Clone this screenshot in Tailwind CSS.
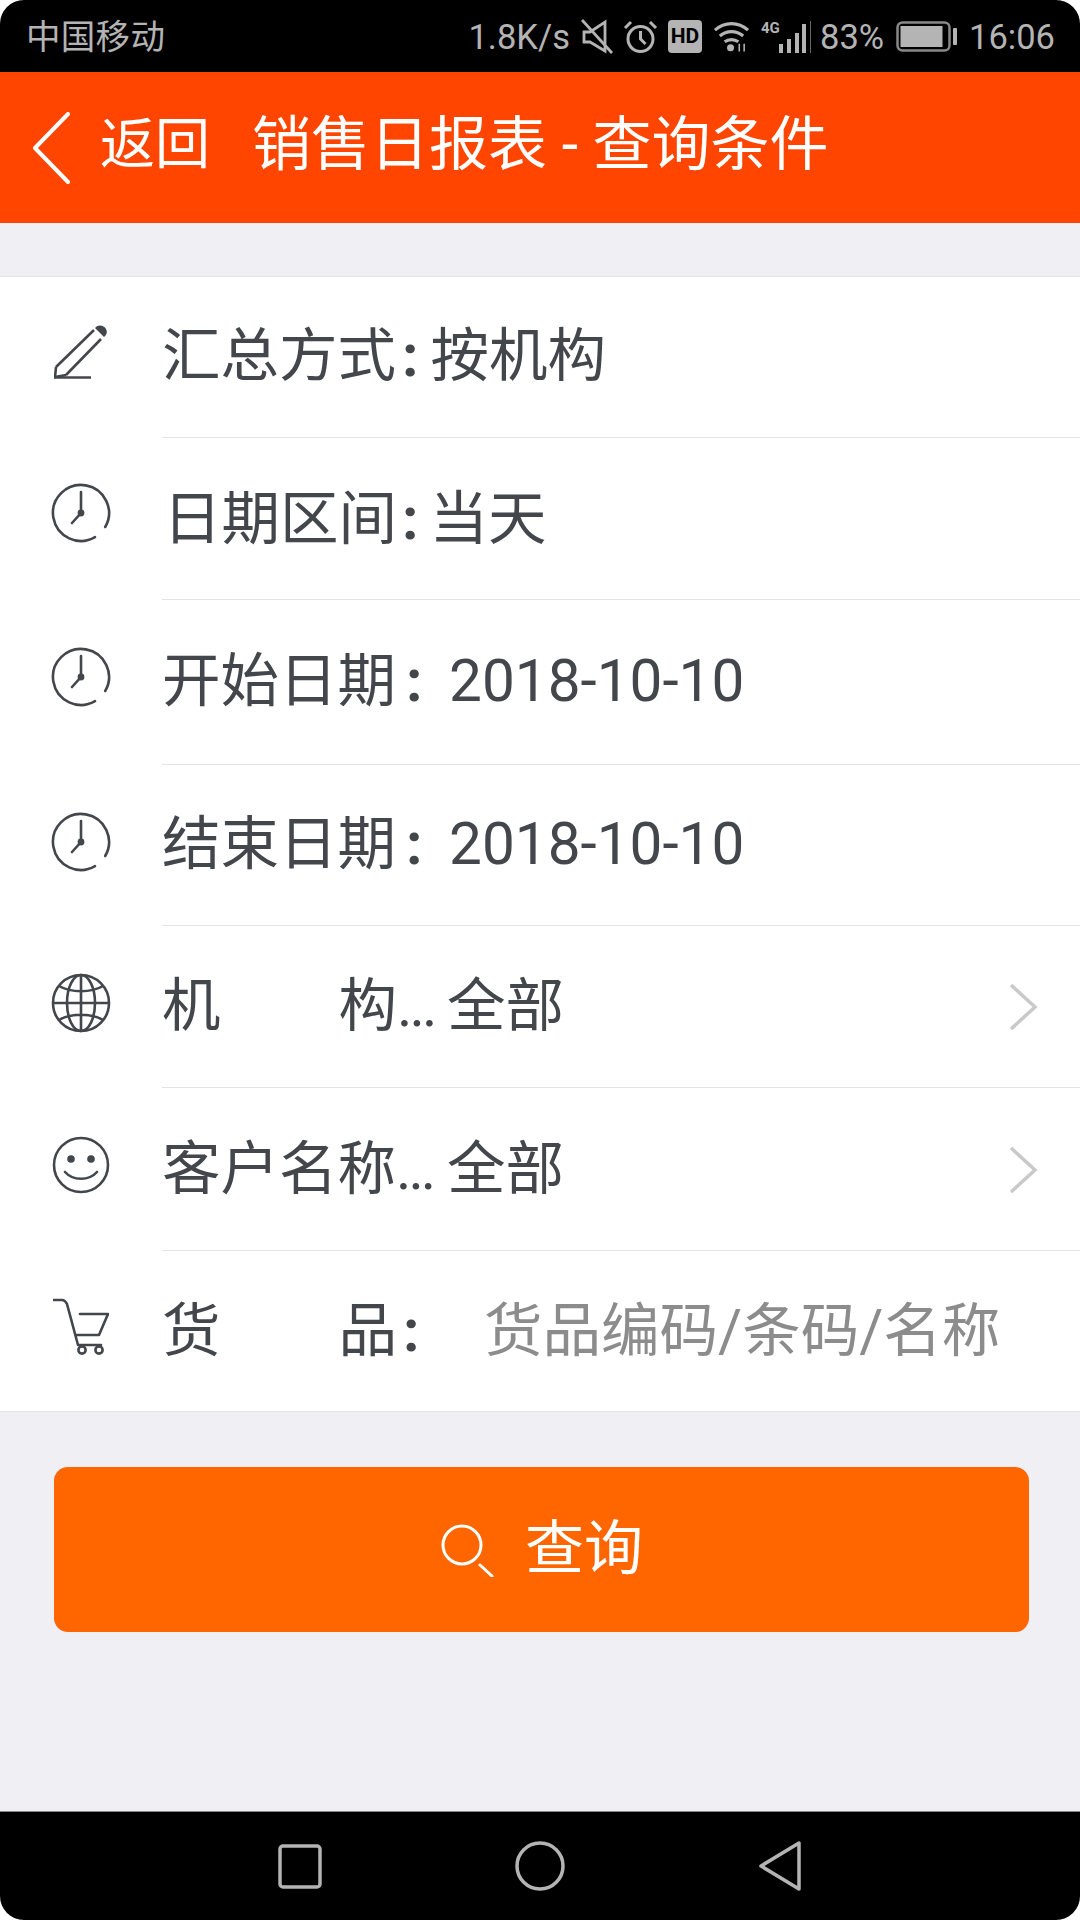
<!DOCTYPE html>
<html lang="zh"><head><meta charset="utf-8">
<script src="https://cdn.jsdelivr.net/npm/@tailwindcss/browser@4"></script>
</head>
<body class="bg-white">
<div class="w-[1080px] h-[1920px] flex flex-col overflow-hidden rounded-[24px] bg-[#efeff4] font-['Roboto','Noto_Sans_CJK_SC',sans-serif] text-[58.5px] text-[#43474c]">
  <div class="h-[72px] bg-black shrink-0 flex items-center text-[34.5px] text-[#b4b4b4] pl-[26px]">
    <span class="tracking-[0.3px] mt-[3px]">中国移动</span>
    <div class="ml-auto flex items-center pr-[25px]">
      <span class="mt-[3px]">1.8K/s</span>
      <svg class="ml-[11px]" width="32" height="35" viewBox="0 0 32 35" fill="none" stroke="#b4b4b4" stroke-width="2.8"><path d="M3 13v10h6l15 9V3L9 13z"/><path d="M1 1l30 33"/></svg>
      <svg class="ml-[10px]" width="35" height="35" viewBox="0 0 35 35" fill="none" stroke="#b4b4b4" stroke-width="3"><circle cx="17.5" cy="20" r="12.5"/><path d="M17.5 12v8l5 5M2 9l6-6M33 9l-6-6"/></svg>
      <div class="ml-[10px] w-[34px] h-[33px] rounded-[4px] bg-[#b4b4b4] text-black text-[21px] font-bold flex items-center justify-center leading-none">HD</div>
      <svg class="ml-[11px]" width="37" height="34" viewBox="0 0 38 34" fill="none" stroke="#b4b4b4" stroke-width="3.2"><path d="M2 11c10-9 24-9 34 0M7 17c7-6 17-6 24 0M12 23c4-3 10-3 14 0"/><circle cx="18" cy="29" r="3.6" fill="#b4b4b4" stroke="none"/><path d="M27 25v8M32 25v8" stroke-width="1.6"/></svg>
      <div class="relative ml-[11px] w-[50px] h-[33px]">
        <span class="absolute left-0 top-[1px] text-[15px] font-bold leading-[15px]">4G</span>
        <svg class="absolute left-0 top-0" width="50" height="33" viewBox="0 0 50 33" fill="#b4b4b4"><rect x="18" y="24" width="4" height="9"/><rect x="26" y="19" width="4" height="14"/><rect x="34" y="13" width="4" height="20"/><rect x="41" y="4" width="4" height="29"/><rect x="49" y="1" width="1" height="32" fill="#666"/></svg>
      </div>
      <span class="ml-[9px] mt-[3px]">83%</span>
      <svg class="ml-[12px]" width="61" height="31" viewBox="0 0 61 31" fill="none"><rect x="1.5" y="1.5" width="52" height="28" rx="5" stroke="#888" stroke-width="2.5"/><rect x="4.5" y="5" width="42" height="21" fill="#b4b4b4"/><rect x="57" y="7" width="4" height="17" rx="1" fill="#b4b4b4"/></svg>
      <span class="ml-[12px] mt-[3px]">16:06</span>
    </div>
  </div>
  <div class="h-[151px] bg-[#ff4500] shrink-0 flex items-center text-white">
    <svg class="ml-[32px]" width="40" height="72" viewBox="0 0 40 72" fill="none" stroke="#fff" stroke-width="4" stroke-linecap="round"><path d="M36 2L3 36l33 34" stroke-linejoin="round"/></svg>
    <div class="flex items-center pb-[6px] text-[59px]">
      <span class="ml-[28px] text-[55px] leading-none">返回</span>
      <span class="ml-[42px] leading-none">销售日报表 - 查询条件</span>
    </div>
  </div>
  <div class="mt-[53px] bg-white border-y border-[#e4e4e8] shrink-0">
    <div class="h-[161px] flex items-center">
      <div class="w-[162px] flex justify-center pb-[12px]"><svg width="54" height="54" viewBox="0 0 54 54" fill="none" stroke="#43474c" stroke-width="2.6"><path d="M2 42L40 5M12 50L47 14M2 42L1 52L12 50"/><path d="M0 52.5H37"/><path d="M41 3C44 -1 50 0 52 4C54 8 52 10 50 12z" fill="#43474c" stroke="none"/></svg></div>
      <div class="flex-1 h-full border-b border-[#e4e4e8] flex items-center"><span>汇总方式</span><span class="ml-[6px] font-bold">:</span><span class="ml-[12px]">按机构</span></div>
    </div>
    <div class="h-[162px] flex items-center">
      <div class="w-[162px] flex justify-center pb-[12px]"><svg width="60" height="60" viewBox="0 0 60 60" fill="none" stroke="#43474c" stroke-width="2.6" stroke-linecap="round"><path d="M54.2 44A28 28 0 1 0 44 54.2"/><path d="M30 9v21L21 40"/><circle cx="30" cy="30" r="3.4" fill="#43474c" stroke="none"/></svg></div>
      <div class="flex-1 h-full border-b border-[#e4e4e8] flex items-center pt-[2px] pl-[1px]"><span>日期区间</span><span class="ml-[5px] font-bold">:</span><span class="ml-[11px]">当天</span></div>
    </div>
    <div class="h-[165px] flex items-center">
      <div class="w-[162px] flex justify-center pb-[11px]"><svg width="60" height="60" viewBox="0 0 60 60" fill="none" stroke="#43474c" stroke-width="2.6" stroke-linecap="round"><path d="M54.2 44A28 28 0 1 0 44 54.2"/><path d="M30 9v21L21 40"/><circle cx="30" cy="30" r="3.4" fill="#43474c" stroke="none"/></svg></div>
      <div class="flex-1 h-full border-b border-[#e4e4e8] flex items-center"><div class="w-[287px] flex"><span>开始日期</span><span class="ml-[10px] font-bold">:</span></div><span>2018-10-10</span></div>
    </div>
    <div class="h-[161px] flex items-center">
      <div class="w-[162px] flex justify-center pb-[8px]"><svg width="60" height="60" viewBox="0 0 60 60" fill="none" stroke="#43474c" stroke-width="2.6" stroke-linecap="round"><path d="M54.2 44A28 28 0 1 0 44 54.2"/><path d="M30 9v21L21 40"/><circle cx="30" cy="30" r="3.4" fill="#43474c" stroke="none"/></svg></div>
      <div class="flex-1 h-full border-b border-[#e4e4e8] flex items-center"><div class="w-[287px] flex"><span>结束日期</span><span class="ml-[10px] font-bold">:</span></div><span>2018-10-10</span></div>
    </div>
    <div class="h-[162px] flex items-center">
      <div class="w-[162px] flex justify-center pb-[9px]"><svg width="60" height="60" viewBox="0 0 60 60" fill="none" stroke="#43474c" stroke-width="2.6"><circle cx="30" cy="30" r="28"/><ellipse cx="30" cy="30" rx="14" ry="28"/><path d="M30 2v56M2 30h56M8 13c12 7 32 7 44 0M8 47c12-7 32-7 44 0"/></svg></div>
      <div class="flex-1 h-full border-b border-[#e4e4e8] flex items-center pt-[1px]"><div class="w-[285px] flex"><span>机</span><span class="ml-[118px]">构</span><span class="tracking-[-3px]">...</span></div><span>全部</span><svg class="ml-auto mr-[42px]" width="30" height="50" viewBox="0 0 30 50" fill="none" stroke="#c9c9c9" stroke-width="3.5"><path d="M3 3l24 22L3 47"/></svg></div>
    </div>
    <div class="h-[163px] flex items-center">
      <div class="w-[162px] flex justify-center pb-[9px]"><svg width="58" height="58" viewBox="0 0 58 58" fill="none" stroke="#43474c" stroke-width="2.6" stroke-linecap="round"><circle cx="29" cy="29" r="27"/><circle cx="19" cy="23" r="3.8" fill="#43474c" stroke="none"/><circle cx="39" cy="23" r="3.8" fill="#43474c" stroke="none"/><path d="M13 36c8 9 24 9 32 0"/></svg></div>
      <div class="flex-1 h-full border-b border-[#e4e4e8] flex items-center pt-[2px]"><div class="w-[285px] flex"><span>客户名称</span><span class="tracking-[-3px]">...</span></div><span>全部</span><svg class="ml-auto mr-[42px]" width="30" height="50" viewBox="0 0 30 50" fill="none" stroke="#c9c9c9" stroke-width="3.5"><path d="M3 3l24 22L3 47"/></svg></div>
    </div>
    <div class="h-[160px] flex items-center">
      <div class="w-[162px] flex justify-center pb-[11px]"><svg width="56" height="58" viewBox="0 0 56 58" fill="none" stroke="#43474c" stroke-width="2.6" stroke-linecap="round" stroke-linejoin="round"><path d="M1 3h8c3 0 4 2 5 4l11 41H48M27 17H55L46 38H23"/><circle cx="29" cy="53" r="3.6"/><circle cx="46" cy="53" r="3.6"/></svg></div>
      <div class="flex-1 h-full flex items-center pt-[1px]"><div class="w-[322px] flex"><span>货</span><span class="ml-[118px]">品</span><span class="ml-[6px] font-bold">:</span></div><span class="text-[#8c8c8c]">货品编码/条码/名称</span></div>
    </div>
  </div>
  <div class="mt-[55px] ml-[54px] w-[975px] h-[165px] rounded-[14px] bg-[#ff6600] shrink-0 flex items-center justify-center text-white text-[59px]">
    <svg width="54" height="54" viewBox="0 0 54 54" fill="none" stroke="#fff" stroke-width="3" stroke-linecap="round"><circle cx="22" cy="22" r="19"/><path d="M40 42l12 11"/></svg>
    <span class="ml-[31px]">查询</span>
  </div>
  <div class="flex-1"></div>
  <div class="h-[109px] bg-black border-t border-[#888] shrink-0 flex items-center justify-center">
    <svg width="44" height="45" viewBox="0 0 44 45" fill="none" stroke="#b4b4b4" stroke-width="3.5"><rect x="2" y="2" width="40" height="41" rx="3"/></svg>
    <svg class="ml-[193px]" width="50" height="50" viewBox="0 0 50 50" fill="none" stroke="#b4b4b4" stroke-width="3.5"><circle cx="25" cy="25" r="23"/></svg>
    <svg class="ml-[193px]" width="44" height="50" viewBox="0 0 44 50" fill="none" stroke="#b4b4b4" stroke-width="3.5" stroke-linejoin="round"><path d="M41 2v46L3 25z"/></svg>
  </div>
</div>
</body></html>
